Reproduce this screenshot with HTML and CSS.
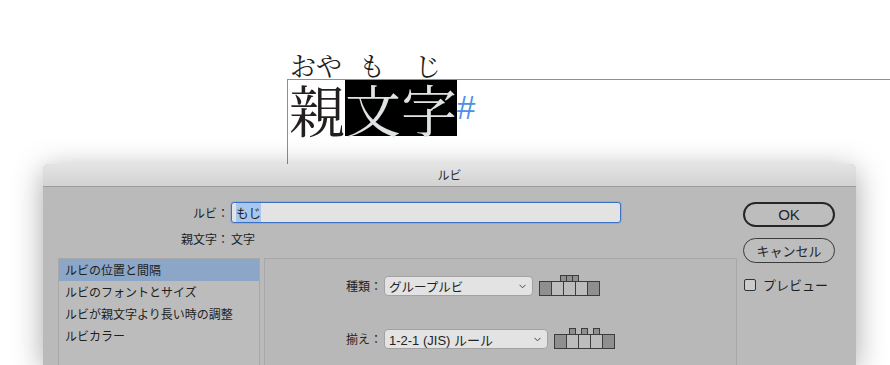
FILE: index.html
```html
<!DOCTYPE html>
<html lang="ja">
<head>
    <meta charset="UTF-8">
    <meta name="viewport" content="width=device-width, initial-scale=1.0">
    <title>ルビ</title>
    <link rel="stylesheet" href="styles.css">
</head>
<body>

    <div class="ruby-row">
        <span>おや</span><span>も</span><span>じ</span>
    </div>
    <div class="text-frame">
        <span class="base">親</span><span class="base selected">文字</span><span class="end-mark">#</span>
    </div>

    <div class="dialog">
        <div class="title-bar">ルビ</div>
        <div class="dialog-body">
            <div class="main">
                <div class="field-row">
                    <span class="field-label">ルビ：</span>
                    <div class="text-input"><span class="text-sel">もじ</span></div>
                </div>
                <div class="field-row info-row">
                    <span class="field-label">親文字：</span>
                    <span class="field-value">文字</span>
                </div>

                <div class="panels">
                    <ul class="category-list">
                        <li class="active">ルビの位置と間隔</li>
                        <li>ルビのフォントとサイズ</li>
                        <li>ルビが親文字より長い時の調整</li>
                        <li>ルビカラー</li>
                    </ul>

                    <div class="settings">
                        <div class="setting-row">
                            <span class="setting-label">種類：</span>
                            <div class="select select-type">
                                <span>グループルビ</span>
                                <svg class="chevron" width="7" height="5" viewBox="0 0 7 5"><polyline points="0.5,0.8 3.5,3.8 6.5,0.8" fill="none" stroke="#444" stroke-width="1"/></svg>
                            </div>
                            <svg class="ruby-diagram" width="62" height="21" viewBox="0 0 62 21">
                                <rect x="21.5" y="0.5" width="6" height="6" class="dark"/>
                                <rect x="27.5" y="0.5" width="6" height="6" class="dark"/>
                                <rect x="33.5" y="0.5" width="6" height="6" class="dark"/>
                                <rect x="0.5" y="6.5" width="12" height="14" class="dark"/>
                                <rect x="12.5" y="6.5" width="12" height="14" class="light"/>
                                <rect x="24.5" y="6.5" width="12" height="14" class="light"/>
                                <rect x="36.5" y="6.5" width="12" height="14" class="light"/>
                                <rect x="48.5" y="6.5" width="12" height="14" class="dark"/>
                            </svg>
                        </div>

                        <div class="setting-row">
                            <span class="setting-label">揃え：</span>
                            <div class="select select-align">
                                <span>1-2-1 (JIS) ルール</span>
                                <svg class="chevron" width="7" height="5" viewBox="0 0 7 5"><polyline points="0.5,0.8 3.5,3.8 6.5,0.8" fill="none" stroke="#444" stroke-width="1"/></svg>
                            </div>
                            <svg class="ruby-diagram" width="62" height="21" viewBox="0 0 62 21">
                                <rect x="15.5" y="0.5" width="6" height="6" class="dark"/>
                                <rect x="27.5" y="0.5" width="6" height="6" class="dark"/>
                                <rect x="39.5" y="0.5" width="6" height="6" class="dark"/>
                                <rect x="0.5" y="6.5" width="12" height="14" class="dark"/>
                                <rect x="12.5" y="6.5" width="12" height="14" class="light"/>
                                <rect x="24.5" y="6.5" width="12" height="14" class="light"/>
                                <rect x="36.5" y="6.5" width="12" height="14" class="light"/>
                                <rect x="48.5" y="6.5" width="12" height="14" class="dark"/>
                            </svg>
                        </div>
                    </div>
                </div>
            </div>

            <div class="side">
                <button class="btn btn-default">OK</button>
                <button class="btn">キャンセル</button>
                <label class="check"><span class="check-box"></span>プレビュー</label>
            </div>
        </div>
    </div>

</body>
</html>
```

FILE: styles.css
```css
html, body {
    margin: 0;
    padding: 0;
    height: 365px;
    overflow: hidden;
    background-color: #fff;
}

body {
    font-family: "Noto Sans CJK JP", "Liberation Sans", sans-serif;
    color: #1e1e1e;
    padding-top: 51px;
    box-sizing: border-box;
}

/* text on the page */

.ruby-row {
    margin-left: 288px;
    display: grid;
    grid-template-columns: 56px 56px 56px;
    justify-items: center;
    font-family: "Noto Serif CJK JP", "Noto Sans CJK JP", serif;
    font-size: 26px;
    line-height: 28px;
    height: 28px;
    color: #1c1c1c;
}

.text-frame {
    margin-left: 287px;
    height: 84px;
    border-top: 1px solid #5d9ad6;
    border-left: 1px solid #5d9ad6;
    padding-left: 1px;
    font-family: "Noto Serif CJK JP", "Noto Sans CJK JP", serif;
    font-size: 56px;
    line-height: 56px;
    white-space: nowrap;
}

.base {
    display: inline-block;
    height: 56px;
    vertical-align: top;
    color: #231f1f;
}

.selected {
    background-color: #000;
    color: #dfe3e3;
}

.end-mark {
    display: inline-block;
    vertical-align: top;
    font-family: "Liberation Sans", sans-serif;
    font-size: 33px;
    line-height: 56px;
    color: #4d8fe4;
}

/* dialog */

.dialog {
    margin-left: 43px;
    width: 813px;
    height: 201px;
    background-color: #bababa;
    border-radius: 6px 6px 0 0;
    box-shadow: 0 6px 30px rgba(0, 0, 0, 0.35);
    overflow: hidden;
}

.title-bar {
    height: 22px;
    line-height: 22px;
    text-align: center;
    font-size: 12px;
    color: #2e2e2e;
    background: linear-gradient(#e4e4e4, #d2d2d2);
    border-bottom: 1px solid #9c9c9c;
}

.dialog-body {
    display: flex;
    padding: 15px 21px 0 15px;
}

.main {
    flex: 1;
}

.field-row {
    display: flex;
    align-items: center;
    font-size: 12px;
}

.field-label {
    width: 171px;
    text-align: right;
}

.text-input {
    margin-left: 2px;
    width: 390px;
    height: 21px;
    box-sizing: border-box;
    padding-left: 4px;
    background-color: #e3e3e3;
    border: 1px solid #3b70c4;
    border-radius: 3px;
    box-shadow: 0 0 0 1px rgba(80, 130, 210, 0.25);
    line-height: 19px;
    font-size: 12.5px;
}

.text-sel {
    background-color: #a9c7ec;
}

.info-row {
    margin-top: 8px;
    line-height: 16px;
}

.field-value {
    margin-left: 2px;
}

.panels {
    display: flex;
    gap: 4px;
    margin-top: 11px;
}

.category-list {
    list-style: none;
    margin: 0;
    padding: 0;
    width: 202px;
    height: 110px;
    box-sizing: border-box;
    border: 1px solid #a8a8a8;
    background-color: #bcbcbc;
    font-size: 12px;
}

.category-list li {
    height: 22px;
    line-height: 22px;
    padding-left: 6px;
}

.category-list li.active {
    background-color: #8ba6c6;
}

.settings {
    flex: 1;
    height: 110px;
    box-sizing: border-box;
    border: 1px solid #a8a8a8;
    background-color: #b8b8b8;
    padding-top: 16px;
}

.setting-row {
    display: flex;
    align-items: flex-end;
    font-size: 12px;
}

.setting-row + .setting-row {
    margin-top: 32px;
}

.setting-label {
    width: 117px;
    text-align: right;
    line-height: 20px;
}

.select {
    margin-left: 2px;
    height: 20px;
    box-sizing: border-box;
    display: flex;
    align-items: center;
    justify-content: space-between;
    padding: 0 6px 0 4px;
    background-color: #e3e3e3;
    border: 1px solid #a2a2a2;
    border-radius: 4px;
    font-size: 12.5px;
    color: #222;
}

.select-type {
    width: 149px;
}

.select-align {
    width: 164px;
    font-family: "Liberation Sans", "Noto Sans CJK JP", sans-serif;
}

.select-align span {
    font-size: 13px;
}

.ruby-diagram {
    display: block;
    margin-left: 6px;
}

.ruby-diagram rect {
    stroke: #3c3c3c;
    stroke-width: 1;
}

.ruby-diagram .dark {
    fill: #8f8f8f;
}

.ruby-diagram .light {
    fill: #bdbdbd;
}

/* buttons column */

.side {
    width: 92px;
    margin-left: 6px;
    display: flex;
    flex-direction: column;
}

.btn {
    height: 25px;
    box-sizing: border-box;
    padding: 0;
    font-family: "Noto Sans CJK JP", "Liberation Sans", sans-serif;
    font-size: 13px;
    color: #262626;
    background-color: #bdbdbd;
    border: 1px solid #3a3a3a;
    border-radius: 13px;
}

.btn-default {
    border: 2px solid #262626;
    font-family: "Liberation Sans", sans-serif;
    font-size: 15px;
}

.btn + .btn {
    margin-top: 11px;
}

.check {
    margin-top: 15px;
    display: flex;
    align-items: center;
    font-size: 13px;
    line-height: 13px;
    padding-left: 1px;
}

.check-box {
    width: 12px;
    height: 12px;
    box-sizing: border-box;
    border: 1px solid #333;
    border-radius: 2px;
    background-color: #cbcbcb;
    margin-right: 7px;
}
```
